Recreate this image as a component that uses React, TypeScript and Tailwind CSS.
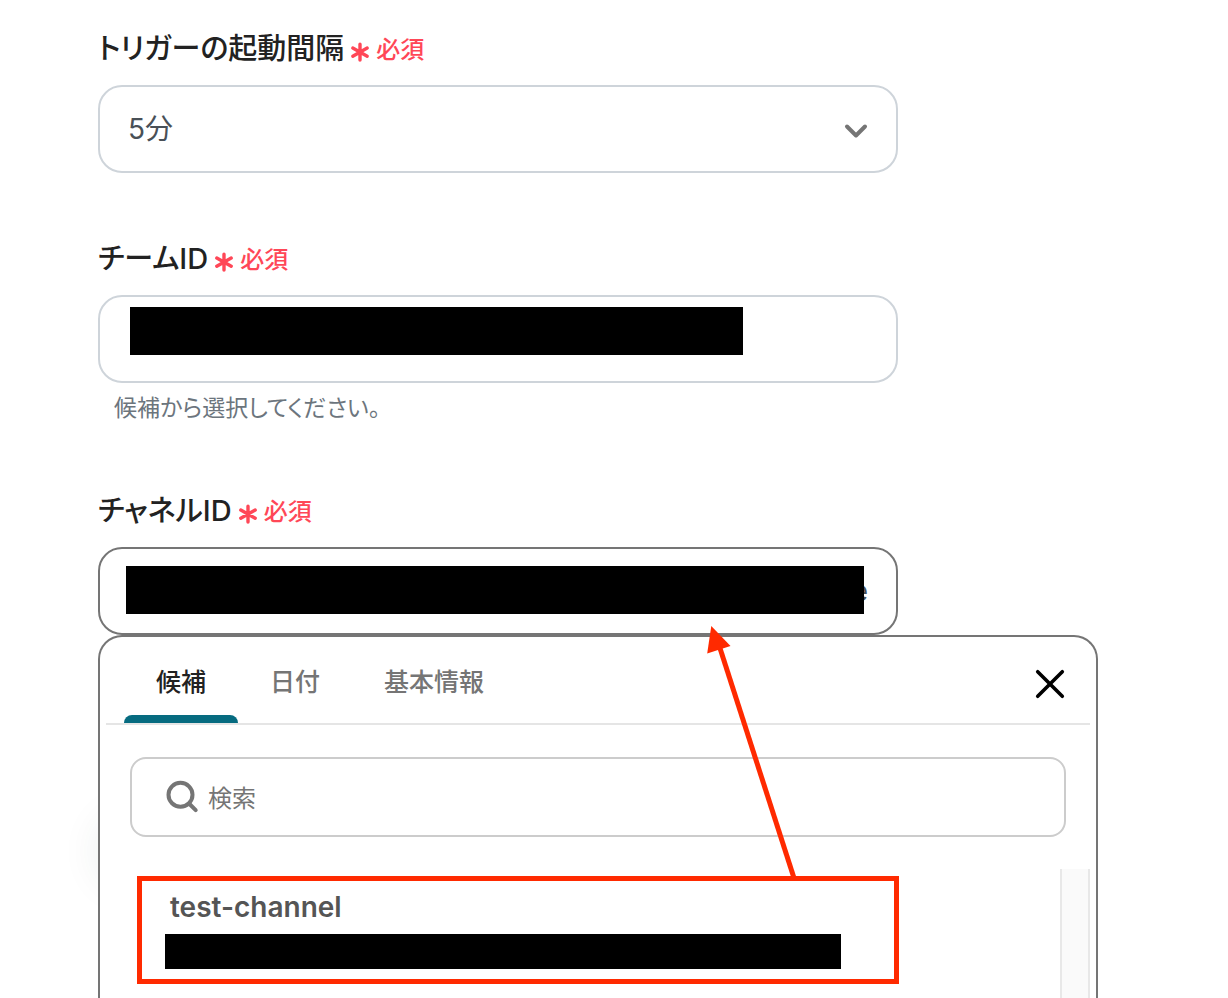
import React, { useState } from 'react';

const TABS = ['候補', '日付', '基本情報'];

const Asterisk = () => (
  <svg viewBox="0 0 20 20" className="w-5 h-5 mt-1" fill="none" stroke="currentColor" strokeWidth="3.4" strokeLinecap="round" aria-hidden="true">
    <path d="M10 2.2v15.8M2.8 6l14.4 8.2M17.2 6 2.8 14.2" />
  </svg>
);

interface FieldLabelProps {
  htmlFor: string;
  children: React.ReactNode;
}

const FieldLabel: React.FC<FieldLabelProps> = ({ htmlFor, children }) => (
  <label htmlFor={htmlFor} className="flex items-center h-10 mb-4 text-[29px] font-medium text-[#222222]">
    {children}
    <span className="flex items-center gap-1.5 ml-1.5 mt-0.5 text-2xl text-[#ff4757]">
      <Asterisk />
      必須
    </span>
  </label>
);

export default function App() {
  const [activeTab, setActiveTab] = useState(TABS[0]);

  return (
    <main className="min-h-screen flex flex-col overflow-hidden bg-white pt-[29px] pl-[98px] pr-[130px] font-['Inter','Noto_Sans_CJK_JP',sans-serif] [font-feature-settings:'palt']">
      {/* Trigger interval */}
      <div className="mb-[66px]">
        <FieldLabel htmlFor="interval">トリガーの起動間隔</FieldLabel>
        <div className="relative w-4/5">
          <select
            id="interval"
            className="appearance-none block w-full h-[88px] px-7 rounded-3xl border-2 border-[#ced4da] bg-white text-[28px] text-[#495057]"
          >
            <option>5分</option>
          </select>
          <svg viewBox="0 0 24 24" className="absolute right-[30px] top-[34px] w-6 h-6 pointer-events-none" fill="none" stroke="#757575" strokeWidth="4" strokeLinecap="round" strokeLinejoin="round" aria-hidden="true">
            <path d="m3 7.5 9 9 9-9" />
          </svg>
        </div>
      </div>

      {/* Team ID */}
      <div className="mb-[66px]">
        <FieldLabel htmlFor="team-id">チームID</FieldLabel>
        <div className="relative w-4/5">
          <input
            id="team-id"
            type="text"
            className="block w-full h-[88px] px-7 rounded-3xl border-2 border-[#ced4da] bg-white text-[28px] text-[#495057]"
          />
          <div className="absolute left-8 right-[155px] top-3 h-12 bg-black" />
        </div>
        <p className="mt-2 pl-4 text-[23px] leading-[34px] text-[#6c757d]">候補から選択してください。</p>
      </div>

      {/* Channel ID */}
      <div className="flex-1 flex flex-col">
        <FieldLabel htmlFor="channel-id">チャネルID</FieldLabel>
        <div className="relative w-4/5">
          <input
            id="channel-id"
            type="text"
            defaultValue="e"
            className="block w-full h-[88px] px-7 rounded-3xl border-2 border-[#757575] bg-white text-right text-[28px] text-[#495057] outline-none"
          />
          <div className="absolute left-7 right-[34px] top-[19px] h-12 bg-black" />
        </div>

        {/* Suggestion panel */}
        <div className="relative flex-1 flex flex-col">
          <div className="absolute left-1 top-[184px] w-20 h-16 rounded-full shadow-[0_0_40px_4px_rgba(20,70,50,0.09)]" />
          <div className="relative flex-1 flex flex-col px-1.5 rounded-t-3xl border-2 border-b-0 border-[#757575] bg-white">
            <div className="flex items-stretch justify-between h-[88px] pl-[18px] pr-5 border-b-2 border-[#e5e5e5]">
              <div role="tablist" className="flex">
                {TABS.map(tab => (
                  <button
                    key={tab}
                    type="button"
                    role="tab"
                    aria-selected={tab === activeTab}
                    onClick={() => setActiveTab(tab)}
                    className={`relative px-8 pt-1.5 text-[25px] font-medium cursor-pointer ${
                      tab === activeTab ? 'text-[#222222]' : 'text-[#757575]'
                    }`}
                  >
                    {tab}
                    {tab === activeTab && (
                      <span className="absolute inset-x-0 bottom-0 h-2 rounded-t-lg bg-[#066b80]" />
                    )}
                  </button>
                ))}
              </div>
              <button type="button" aria-label="閉じる" className="pt-2 cursor-pointer">
                <svg viewBox="0 0 40 40" className="w-10 h-10" fill="none" stroke="#000" strokeWidth="3.6" strokeLinecap="round" aria-hidden="true">
                  <path d="m7.7 7.7 24.6 24.6M32.3 7.7 7.7 32.3" />
                </svg>
              </button>
            </div>

            <label className="flex items-center gap-2 h-20 mt-8 mx-6 px-8 rounded-2xl border-2 border-[#cccccc]">
              <svg viewBox="0 0 36 36" className="w-9 h-9 shrink-0" fill="none" stroke="#757575" strokeWidth="4" strokeLinecap="round" aria-hidden="true">
                <circle cx="16.5" cy="15.8" r="12" />
                <path d="m25.5 25 6.2 6.2" />
              </svg>
              <input
                type="text"
                aria-label="検索"
                placeholder="検索"
                className="flex-1 min-w-0 pt-1 text-2xl text-[#222222] placeholder:text-[#757575] outline-none"
              />
            </label>

            <div className="flex-1 flex mt-8">
              <ul className="flex-1">
                <li className="relative">
                  <button type="button" className="block w-full pl-16 pt-4 pb-7 text-left cursor-pointer">
                    <span className="block text-[28px] leading-[44px] font-semibold text-[#555555]">test-channel</span>
                    <span className="block w-[76%] h-[35px] mt-[5px] -ml-[5px] bg-black" />
                  </button>
                  <span className="absolute left-[31px] right-[161px] top-[7px] h-[108px] border-[5px] border-[#ff2a00]" />
                </li>
              </ul>
              <div className="w-[30px] border-x-2 border-[#e8e8e8] bg-[#fafafa]" />
            </div>
          </div>

          {/* Arrow from the picked channel to its field */}
          <svg viewBox="0 0 100 260" className="absolute left-[602px] -top-[15px] w-[100px] h-[260px] pointer-events-none" aria-hidden="true">
            <path d="M18 22 94 258" stroke="#ff2a00" strokeWidth="5" />
            <path d="M11.3 6 30.5 26 7.2 33.5Z" fill="#ff2a00" />
          </svg>
        </div>
      </div>
    </main>
  );
}
